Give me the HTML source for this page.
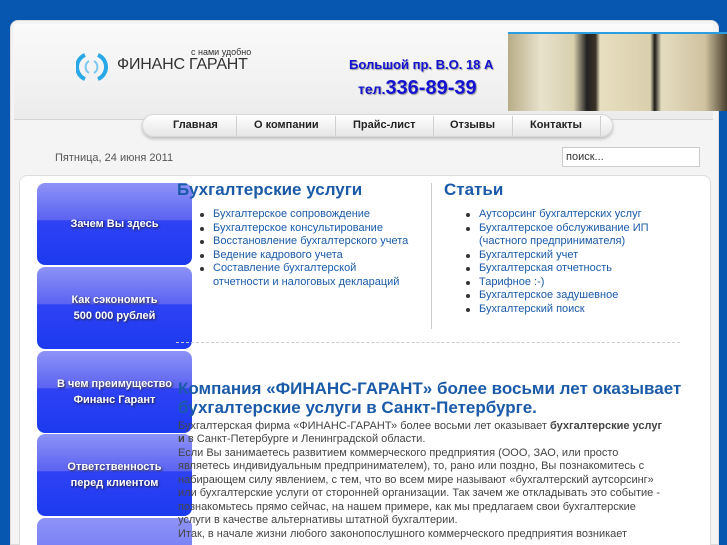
<!DOCTYPE html>
<html style="width:727px;height:545px;overflow:hidden"><head><meta charset="utf-8"><style>
*{margin:0;padding:0;box-sizing:border-box}
body{width:727px;height:545px;overflow:hidden;background:#0756b0;font-family:"Liberation Sans",sans-serif;position:relative}
.panel{position:absolute;left:10px;top:20px;width:709px;height:525px;background:#f4f4f4;border-radius:8px 8px 0 0;border:1px solid #dcdcdc}
.header{position:absolute;left:14px;top:24px;width:699px;height:96px;background:linear-gradient(#fafafa,#ececec);border-bottom:1px solid #d4d4d4}
.img{position:absolute;left:508px;top:32px;width:219px;height:79px;background:linear-gradient(90deg,#b8ac88 0,#e8e2cc 15%,#d8cfae 30%,#222 36%,#3a3326 40%,#e8dfc0 42%,#d9cfad 65%,#1c1a16 67%,#e5dcc0 70%,#cfc2a0 90%,#4a4030 100%);border-top:2px solid #2a9ee0}
.nav{position:absolute;left:142px;top:114px;width:471px;height:23px;border-radius:12px;background:linear-gradient(#fff,#e6e6e6);box-shadow:0 2px 3px #bbb;border:1px solid #d8d8d8;font-size:11px;font-weight:bold;color:#222}
.nav span{position:absolute;top:4px}
.nav i{position:absolute;top:1px;width:1px;height:20px;background:#d0d0d0}
.card{position:absolute;left:19px;top:175px;width:692px;height:370px;background:#fff;border-radius:8px 8px 0 0;border:1px solid #ddd;border-bottom:none}
.btn{position:absolute;left:37px;width:155px;height:82px;border-radius:8px;background:linear-gradient(#8d93f6 0%,#5b63f2 45%,#2f42f4 46%,#1c3af0 100%);color:#fff;font-weight:bold;font-size:11px;text-align:center;text-shadow:1px 1px 2px #223;line-height:16px;display:flex;align-items:center;justify-content:center}
h2{position:absolute;color:#1a5aa8;font-size:17px;font-weight:bold}
ul{position:absolute;font-size:11px;line-height:13.5px;color:#1a5aa8;list-style:none;white-space:nowrap}
ul li{position:relative}
ul li:before{content:"";position:absolute;left:-13px;top:5px;width:4px;height:4px;border-radius:2px;background:#333}
.body{position:absolute;left:178px;font-size:11px;line-height:13.45px;color:#444;white-space:nowrap}
</style></head><body>
<div class="panel"></div>
<div class="header"></div>
<svg style="position:absolute;left:76px;top:52px" width="32" height="30" viewBox="0 0 32 30"><path d="M9 3 A13 13 0 0 0 9 27" stroke="#29a8e8" stroke-width="4" fill="none"/><path d="M22 3 A13 13 0 0 1 22 27" stroke="#29a8e8" stroke-width="4" fill="none"/><path d="M13 9 A7 7 0 0 0 13 21" stroke="#7cc8ef" stroke-width="2" fill="none"/><path d="M18 9 A7 7 0 0 1 18 21" stroke="#7cc8ef" stroke-width="2" fill="none"/></svg>
<div style="position:absolute;left:191px;top:47px;font-size:9px;color:#333">с нами удобно</div>
<div style="position:absolute;left:117px;top:56px;font-size:16px;color:#333;letter-spacing:-0.2px">ФИНАНС ГАРАНТ</div>
<div style="position:absolute;left:349px;top:57px;font-size:13px;font-weight:bold;color:#1212d0;text-shadow:1px 1px 1px #999">Большой пр. В.О. 18 А</div>
<div style="position:absolute;left:358px;top:77px;font-size:14px;font-weight:bold;color:#1212d0;text-shadow:1px 1px 1px #999">тел.<span style="font-size:20px">336-89-39</span></div>
<div class="img"></div>
<div class="nav"><span style="left:30px">Главная</span><i style="left:93px"></i><span style="left:111px">О компании</span><i style="left:192px"></i><span style="left:210px">Прайс-лист</span><i style="left:290px"></i><span style="left:307px">Отзывы</span><i style="left:369px"></i><span style="left:387px">Контакты</span><i style="left:457px"></i></div>
<div style="position:absolute;left:55px;top:152px;font-size:11px;color:#555">Пятница, 24 июня 2011</div>
<div style="position:absolute;left:562px;top:147px;width:138px;height:20px;background:#fff;border:1px solid #ccc;font-size:11px;color:#333;padding:3px 3px">поиск...</div>
<div class="card"></div>
<div class="btn" style="top:183px">Зачем Вы здесь</div>
<div class="btn" style="top:267px">Как сэкономить<br>500 000 рублей</div>
<div class="btn" style="top:351px">В чем преимущество<br>Финанс Гарант</div>
<div class="btn" style="top:434px">Ответственность<br>перед клиентом</div>
<div class="btn" style="top:518px;height:27px;border-radius:8px 8px 0 0;background:linear-gradient(#8d93f6,#7c83f5)"></div>
<h2 style="left:177px;top:180px">Бухгалтерские услуги</h2>
<ul style="left:213px;top:208px"><li>Бухгалтерское сопровождение</li><li>Бухгалтерское консультирование</li><li>Восстановление бухгалтерского учета</li><li>Ведение кадрового учета</li><li>Составление бухгалтерской<br>отчетности и налоговых деклараций</li></ul>
<div style="position:absolute;left:431px;top:183px;width:1px;height:146px;background:#ccc"></div>
<h2 style="left:444px;top:180px">Статьи</h2>
<ul style="left:479px;top:208px"><li>Аутсорсинг бухгалтерских услуг</li><li>Бухгалтерское обслуживание ИП<br>(частного предпринимателя)</li><li>Бухгалтерский учет</li><li>Бухгалтерская отчетность</li><li>Тарифное :-)</li><li>Бухгалтерское задушевное</li><li>Бухгалтерский поиск</li></ul>
<div style="position:absolute;left:176px;top:342px;width:504px;border-top:1px dashed #ccc"></div>
<h2 style="left:178px;top:379px;line-height:19px;white-space:nowrap">Компания «ФИНАНС-ГАРАНТ» более восьми лет оказывает<br>бухгалтерские услуги в Санкт-Петербурге.</h2>
<div class="body" style="top:420px">Бухгалтерская фирма «ФИНАНС-ГАРАНТ» более восьми лет оказывает <b>бухгалтерские услуг</b><br><b>и</b> в Санкт-Петербурге и Ленинградской области.<br>Если Вы занимаетесь развитием коммерческого предприятия (ООО, ЗАО, или просто<br>являетесь индивидуальным предпринимателем), то, рано или поздно, Вы познакомитесь с<br>набирающем силу явлением, с тем, что во всем мире называют «бухгалтерский аутсорсинг»<br>или бухгалтерские услуги от сторонней организации. Так зачем же откладывать это событие -<br>познакомьтесь прямо сейчас, на нашем примере, как мы предлагаем свои бухгалтерские<br>услуги в качестве альтернативы штатной бухгалтерии.<br>Итак, в начале жизни любого законопослушного коммерческого предприятия возникает</div>
</body></html>
